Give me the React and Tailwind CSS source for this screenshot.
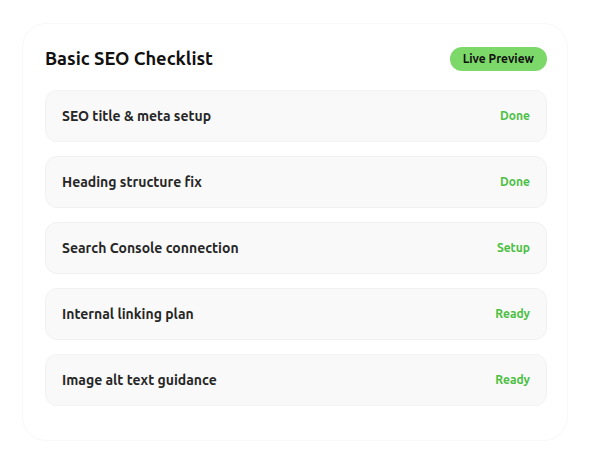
import React from "react";

const items = [
  { label: "SEO title & meta setup", status: "Done" },
  { label: "Heading structure fix", status: "Done" },
  { label: "Search Console connection", status: "Setup" },
  { label: "Internal linking plan", status: "Ready" },
  { label: "Image alt text guidance", status: "Ready" },
];

export default function App() {
  return (
    <div
      className="w-[593px] h-[465px] bg-white pt-[23px] pl-[22px]"
      style={{ fontFamily: '"Ubuntu", "Noto Sans", "Open Sans", sans-serif' }}
    >
      <div className="w-[546px] h-[418px] rounded-[24px] border border-[#f8f8f8] bg-white pl-[22px] pr-[20px] pt-[23px]">
        {/* header */}
        <div className="flex items-center justify-between h-[24px] mb-[19px]">
          <h2 className="text-[18.3px] font-bold text-[#111111]">
            Basic SEO Checklist
          </h2>
          <span className="h-[24px] px-[13px] rounded-full bg-[#7dd86a] text-[12px] font-bold text-[#111111] flex items-center">
            Live Preview
          </span>
        </div>

        {/* checklist rows */}
        <div className="flex flex-col gap-[14px]">
          {items.map((item) => (
            <div
              key={item.label}
              className="h-[52px] rounded-[12px] border border-[#f1f1f1] bg-[#f9f9f9] px-[16px] flex items-center justify-between"
            >
              <span className="text-[14px] font-bold text-[#262626]">
                {item.label}
              </span>
              <span className="text-[12px] font-bold text-[#4cc043]">
                {item.status}
              </span>
            </div>
          ))}
        </div>
      </div>
    </div>
  );
}
